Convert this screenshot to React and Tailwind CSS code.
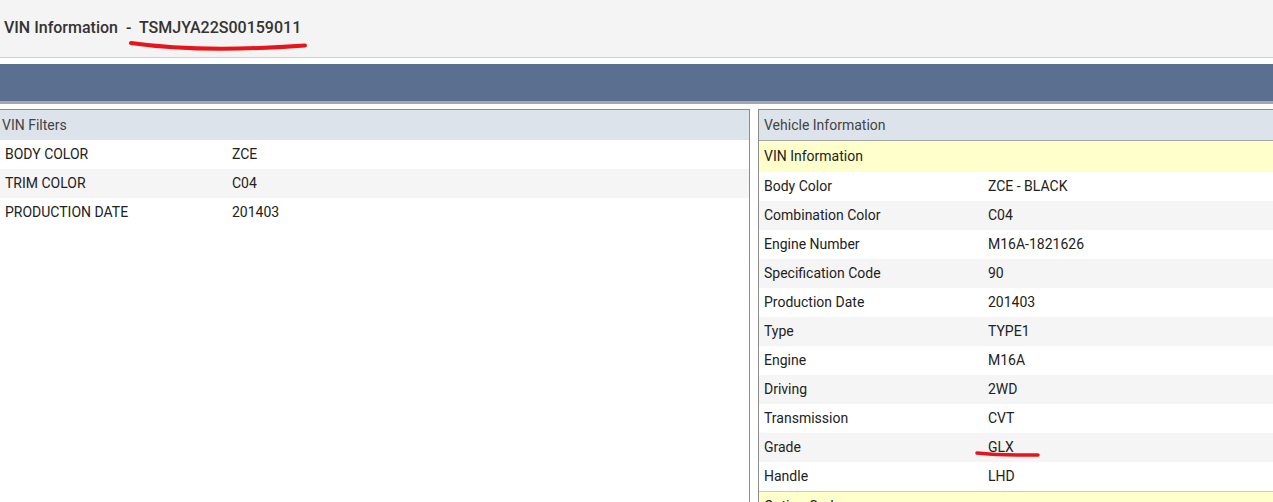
import React from 'react'

const filters = [
  ['BODY COLOR', 'ZCE'],
  ['TRIM COLOR', 'C04'],
  ['PRODUCTION DATE', '201403'],
]

const vinInfo = [
  ['Body Color', 'ZCE - BLACK'],
  ['Combination Color', 'C04'],
  ['Engine Number', 'M16A-1821626'],
  ['Specification Code', '90'],
  ['Production Date', '201403'],
  ['Type', 'TYPE1'],
  ['Engine', 'M16A'],
  ['Driving', '2WD'],
  ['Transmission', 'CVT'],
  ['Grade', 'GLX'],
  ['Handle', 'LHD'],
]

const font = { fontFamily: 'Roboto, "Noto Sans", sans-serif' }

export default function App() {
  return (
    <div className="relative w-[1273px] h-[502px] overflow-hidden bg-white text-[14px] text-[#222]" style={font}>
      {/* page header */}
      <div className="h-[58px] bg-[#f4f4f4] border-b border-[#cfcfcf] flex items-center pl-[4px] pb-[2px]">
        <h1 className="text-[16px] font-medium text-[#333] whitespace-pre">VIN Information  -  TSMJYA22S00159011</h1>
      </div>

      {/* toolbar bar */}
      <div className="mt-[6px] h-[40px] bg-[#5b6f91] border-b-[3px] border-[#a8a8a8]" />

      <div className="mt-[5px] flex items-start">
        {/* VIN filters */}
        <div className="w-[750px] h-[400px] border-t border-r border-[#8c8c8c]">
          <div className="h-[30px] bg-[#dde3eb] flex items-center pl-[2px] text-[#444]">VIN Filters</div>
          {filters.map(([k, v], i) => (
            <div key={k} className={`h-[29px] flex items-center ${i % 2 ? 'bg-[#f5f5f5]' : 'bg-white'}`}>
              <div className="w-[232px] pl-[5px]">{k}</div>
              <div>{v}</div>
            </div>
          ))}
        </div>

        {/* vehicle information */}
        <div className="ml-[8px] flex-1 h-[400px] border-t border-l border-[#8c8c8c]">
          <div className="h-[31px] bg-[#dde3eb] flex items-center pl-[5px] text-[#444] border-b border-[#a5a5a5]">Vehicle Information</div>
          <div className="h-[31px] bg-[#ffffcc] flex items-center pl-[5px]">VIN Information</div>
          {vinInfo.map(([k, v], i) => (
            <div key={k} className={`h-[29px] flex items-center ${i % 2 ? 'bg-[#f5f5f5]' : 'bg-white'}`}>
              <div className="w-[229px] pl-[5px]">{k}</div>
              <div>{v}</div>
            </div>
          ))}
          <div className="h-[30px] bg-[#ffffcc] border-t border-[#cccccc] flex items-center pl-[5px]">Option Code</div>
        </div>
      </div>

      {/* hand-drawn red marks */}
      <svg className="absolute left-0 top-0 pointer-events-none" width="1273" height="502">
        <path d="M131 43 Q 200 53 305 45.5" fill="none" stroke="#e8141b" strokeWidth="4" strokeLinecap="round" />
        <path d="M977 453 Q 1000 455.5 1038 455" fill="none" stroke="#e8141b" strokeWidth="3.5" strokeLinecap="round" />
      </svg>
    </div>
  )
}
